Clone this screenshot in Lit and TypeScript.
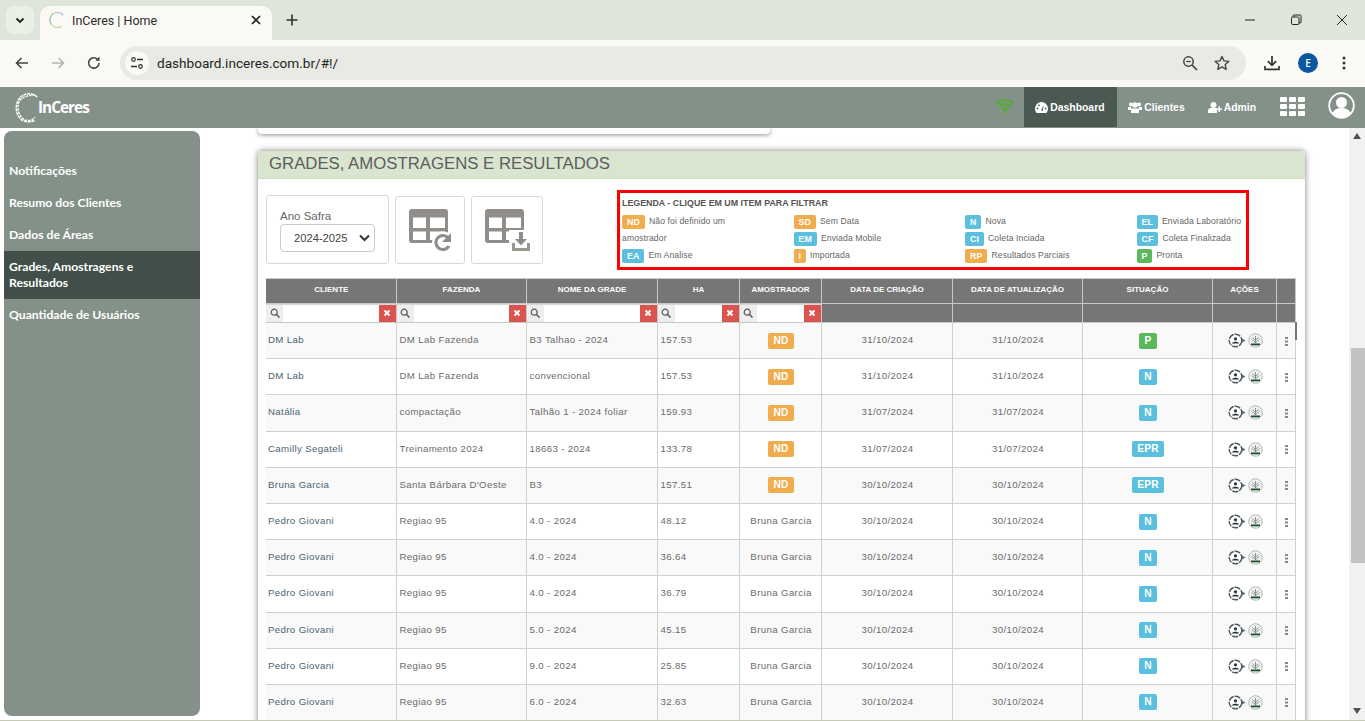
import { LitElement, html, css, svg } from "lit";
import { customElement } from "lit/decorators.js";

const COLS = [
  { t: "CLIENTE", w: 130, f: true },
  { t: "FAZENDA", w: 130, f: true },
  { t: "NOME DA GRADE", w: 131, f: true },
  { t: "HA", w: 82, f: true },
  { t: "AMOSTRADOR", w: 82, f: true },
  { t: "DATA DE CRIAÇÃO", w: 131, f: false },
  { t: "DATA DE ATUALIZAÇÃO", w: 130, f: false },
  { t: "SITUAÇÃO", w: 130, f: false },
  { t: "AÇÕES", w: 64, f: false },
  { t: "", w: 19, f: false },
];

const ROWS: string[][] = [
  ["DM Lab", "DM Lab Fazenda", "B3 Talhao - 2024", "157.53", "ND", "31/10/2024", "31/10/2024", "P"],
  ["DM Lab", "DM Lab Fazenda", "convencional", "157.53", "ND", "31/10/2024", "31/10/2024", "N"],
  ["Natália", "compactação", "Talhão 1 - 2024 foliar", "159.93", "ND", "31/07/2024", "31/07/2024", "N"],
  ["Camilly Segateli", "Treinamento 2024", "18663 - 2024", "133.78", "ND", "31/07/2024", "31/07/2024", "EPR"],
  ["Bruna Garcia", "Santa Bárbara D'Oeste", "B3", "157.51", "ND", "30/10/2024", "30/10/2024", "EPR"],
  ["Pedro Giovani", "Regiao 95", "4.0 - 2024", "48.12", "Bruna Garcia", "30/10/2024", "30/10/2024", "N"],
  ["Pedro Giovani", "Regiao 95", "4.0 - 2024", "36.64", "Bruna Garcia", "30/10/2024", "30/10/2024", "N"],
  ["Pedro Giovani", "Regiao 95", "4.0 - 2024", "36.79", "Bruna Garcia", "30/10/2024", "30/10/2024", "N"],
  ["Pedro Giovani", "Regiao 95", "5.0 - 2024", "45.15", "Bruna Garcia", "30/10/2024", "30/10/2024", "N"],
  ["Pedro Giovani", "Regiao 95", "9.0 - 2024", "25.85", "Bruna Garcia", "30/10/2024", "30/10/2024", "N"],
  ["Pedro Giovani", "Regiao 95", "6.0 - 2024", "32.63", "Bruna Garcia", "30/10/2024", "30/10/2024", "N"],
];

const LEGEND: [string, string][][] = [
  [["ND", "Não foi definido um amostrador"], ["EA", "Em Analise"]],
  [["SD", "Sem Data"], ["EM", "Enviada Mobile"], ["I", "Importada"]],
  [["N", "Nova"], ["CI", "Coleta Inciada"], ["RP", "Resultados Parciais"]],
  [["EL", "Enviada Laboratório"], ["CF", "Coleta Finalizada"], ["P", "Pronta"]],
];

const MENU = ["Notificações", "Resumo dos Clientes", "Dados de Áreas", "Grades, Amostragens e Resultados", "Quantidade de Usuários"];

const tagColor = (t: string) => {
  if (["ND", "SD", "I", "RP"].includes(t)) return "orange";
  if (t === "P") return "green";
  return "blue";
};

const gridIcon = (down: boolean) => html`
  <svg width="48" height="44" viewBox="0 0 48 44">
    <rect width="39" height="34" rx="3" fill="#918d8a"/>
    <path fill="#fff" d="M4 8.500h13v10.500H4zM21 8.500h15v10.500H21zM4 22.500h13v8.500H4zM21 22.500h15v8.500H21z"/>
    ${down
      ? svg`<rect x="24" y="21" width="24" height="23" fill="#fff"/>
            <path fill="#9a9692" d="M27 34h3v5h12v-5h3v8H27z"/>
            <path fill="#918d8a" d="M34 23h4v7h4l-6 6.500-6-6.500h4z"/>`
      : svg`<circle cx="34" cy="33.500" r="11" fill="#fff"/>
            <path fill="none" stroke="#918d8a" stroke-width="3" d="M40.500 31a7 7 0 1 0-.5 6"/>
            <path fill="#918d8a" d="M42 24v9h-9z"/>`}
  </svg>`;

@customElement("app-root")
export class AppRoot extends LitElement {
  static styles = css`
    :host { display: block; width: 1365px; height: 721px; overflow: hidden; background: #fff; font-family: "Liberation Sans", Arial, sans-serif; }
    .page { height: 721px; display: flex; flex-direction: column; overflow: hidden; }

    .tabstrip { height: 40px; flex: none; background: #dfe5da; display: flex; align-items: flex-end; position: relative; }
    .tablist-btn { width: 28px; height: 28px; margin: 0 0 6px 6px; border-radius: 8px; background: #eaf1e4; display: flex; align-items: center; justify-content: center; }
    .tab { width: 232px; height: 34px; margin-left: 6px; background: #faf9f5; border-radius: 10px 10px 0 0; display: flex; align-items: center; padding: 0 10px 6px 8px; box-sizing: border-box; font: 12.5px Roboto, sans-serif; color: #2b2b2b; }
    .tab .title { margin-left: 6px; flex: 1; }
    .plus { margin: 0 0 6px 6px; width: 28px; height: 28px; display: flex; align-items: center; justify-content: center; }
    .win { margin-left: auto; display: flex; align-self: flex-start; height: 40px; }
    .win span { width: 46px; display: flex; align-items: center; justify-content: center; }

    .toolbar { height: 46px; flex: none; background: #faf9f5; display: flex; align-items: center; box-sizing: border-box; padding-left: 4px; }
    .nav-i { width: 36px; height: 36px; display: flex; align-items: center; justify-content: center; }
    .omni { width: 1126px; height: 34px; margin-left: 8px; background: #e9eae3; border-radius: 17px; display: flex; align-items: center; font: 13.6px Roboto, sans-serif; color: #1f1f1f; }
    .omni .tune { width: 24px; height: 24px; border-radius: 12px; margin: 0 8px 0 5px; background: #faf9f5; display: flex; align-items: center; justify-content: center; }
    .omni .url { flex: 1; }
    .omni .i { width: 32px; display: flex; justify-content: center; }
    .omni .i.last { margin-right: 8px; }
    .dl { width: 26px; margin-left: 13px; display: flex; justify-content: center; }
    .acct { width: 20px; height: 20px; margin-left: 13px; border-radius: 50%; background: #0b57a0; color: #fff; font: 600 10px "Open Sans", sans-serif; display: flex; align-items: center; justify-content: center; }
    .dots { margin-left: 24px; display: flex; }

    .appbar { height: 41px; margin-top: 1px; flex: none; background: #849189; display: flex; align-items: stretch; color: #fff; position: relative; z-index: 2; }
    .logo { display: flex; align-items: center; margin-left: 15px; width: 90px; }
    .logo b { font: 700 15.4px "Open Sans", sans-serif; margin-left: -1px; letter-spacing: -1px; }
    .bar-right { margin-left: auto; display: flex; align-items: stretch; }
    .wifi { display: flex; align-items: center; margin-right: 9px; padding-bottom: 4px; }
    .bar-item { display: flex; align-items: center; gap: 2px; font-weight: 700; font-size: 10.4px; padding: 0 12px 0 11px; height: 40px; }
    .bar-item.active { background: #4a5a53; width: 93px; box-sizing: border-box; }
    .apps { display: grid; grid-template-columns: repeat(3, 7px); grid-auto-rows: 5px; gap: 2px; align-content: center; margin-left: 12px; padding-bottom: 2px; }
    .apps i { background: #fff; border-radius: 1px; display: block; }
    .avatar { display: flex; align-items: center; margin: 0 10px 0 23px; padding-bottom: 4px; }

    .body { flex: 1; min-height: 0; display: flex; position: relative; }
    .side { width: 196px; margin: 3px 0 5px 4px; background: #849189; border-radius: 8px; padding-top: 24px; box-sizing: border-box; flex: none; font: 700 12.2px Lato, sans-serif; color: #fff; }
    .side a { display: block; padding: 8px 30px 8px 5px; line-height: 16px; }
    .side a.on { background: #414f48; }
    .main { flex: 1; min-width: 0; padding: 0 44px 0 58px; overflow: hidden; }
    .stub { width: 512px; height: 6px; background: #fff; border-radius: 0 0 4px 4px; box-shadow: 0 1px 4px rgba(0,0,0,.45); }
    .panel { margin-top: 17px; width: 1047px; background: #fff; border-radius: 4px 4px 0 0; box-shadow: 0 0 6px rgba(0,0,0,.5); height: 600px; overflow: hidden; }
    .panel h2 { margin: 0; height: 27px; background: #dae5d0; color: #5d5d5d; font: 400 16.75px/25px "Liberation Sans", sans-serif; padding-left: 11px; border-bottom: 1px solid #cfdcc4; }
    .tools { display: flex; align-items: flex-start; margin: 16px 0 0 8px; height: 83px; }
    .box { border: 1px solid #d8d8d8; border-radius: 3px; box-sizing: border-box; background: #fff; }
    .safra { width: 123px; height: 69px; padding: 14px 13px; font-size: 11.5px; color: #666; }
    .safra .sel { margin-top: 2px; width: 95px; height: 28px; box-sizing: border-box; border: 1px solid #ccc; border-radius: 4px; display: flex; align-items: center; justify-content: space-between; padding: 0 4px 0 13px; color: #444; font-size: 11.2px; }
    .ico { margin-left: 6px; margin-top: 1px; height: 68px; width: 70px; padding: 12px 0 0 13px; box-sizing: border-box; }
    .ico.wide { width: 72px; }
    .legend { margin: -5px 0 0 74px; width: 632px; height: 80px; box-sizing: border-box; border: 3px solid #f00; padding: 3px 2px 0; font-size: 8.65px; color: #666; letter-spacing: .1px; }
    .legend h4 { margin: 1px 0 4px; font-size: 8.85px; font-weight: 700; color: #555; line-height: 12px; letter-spacing: 0; }
    .lg { display: grid; grid-template-columns: repeat(4, 171.5px); }
    .lg div { line-height: 17px; }
    .lg p { margin: 0; max-width: 140px; }
    .tag { display: inline-block; border-radius: 2px; color: #fff; font-weight: 700; text-align: center; }
    .lg .tag { font-size: 8.8px; line-height: 14px; padding: 0 5px; margin-right: 4px; vertical-align: -1px; }
    .orange { background: #f0ad4e; }
    .blue { background: #5bc0de; }
    .green { background: #5cb85c; }

    .tw { margin-left: 8px; position: relative; width: 1032px; }
    table { border-collapse: collapse; table-layout: fixed; width: 1029px; font-size: 9.7px; }
    th { background: #767676; color: #fff; font-size: 8px; font-weight: 700; height: 25px; box-sizing: border-box; padding: 0 0 3px 1px; border: 1px solid #c8c8c8; }
    th:first-child, td:first-child { border-left: none; }
    tr.f th { height: 19px; padding: 0; vertical-align: middle; }
    tr.f th.has { background: #d8d8d8; }
    td { height: 36.2px; box-sizing: border-box; padding: 0 1px 2px 3px; border: 1px solid #d0d0d0; color: #6b6b6b; letter-spacing: .35px; }
    td:first-child { padding-left: 2px; color: #4a6472; }
    tbody tr:nth-child(odd) td { background: #f9f9f9; }
    td.c { text-align: center; }
    td.tg { padding-bottom: 0; }
    td .tag { font-size: 10.2px; line-height: 16px; min-width: 18px; box-sizing: border-box; padding: 0 5.5px; letter-spacing: .2px; }
    .flt { display: flex; height: 17px; align-items: stretch; }
    .flt .s { width: 17px; background: #eee; display: flex; align-items: center; justify-content: center; flex: none; }
    .flt .in { flex: 1; background: #fff; }
    .flt .x { width: 17px; background: #d9534f; display: flex; align-items: center; justify-content: center; flex: none; }
    .act { display: flex; justify-content: center; align-items: center; gap: 1px; }
    .kebab { display: flex; justify-content: center; margin-top: 1px; }
    .thumb { position: absolute; left: 1029px; top: 44px; width: 2px; height: 18px; background: #777; }

    .sb { width: 16px; flex: none; background: #f1f1f1; display: flex; flex-direction: column; padding-bottom: 2px; box-sizing: border-box; }
    .sb .ar { height: 16px; display: flex; align-items: center; justify-content: center; }
    .sb .tr { flex: 1; padding: 204px 0 0 2px; }
    .sb .th { height: 215px; background: #c1c1c1; }
    .line { height: 1px; flex: none; background: #c5c9b4; margin-top: -1px; position: relative; z-index: 3; }
  `;

  render() {
    return html`<div class="page">
      <div class="tabstrip">
        <div class="tablist-btn"><svg width="12" height="12" viewBox="0 0 12 12"><path d="M2.500 4.500 6 8l3.500-3.500" fill="none" stroke="#222" stroke-width="1.800"/></svg></div>
        <div class="tab">
          <svg width="18" height="18" viewBox="0 0 18 18"><path d="M15 4A7.500 7.500 0 0 0 9 1.500" fill="none" stroke="#9bb6d4" stroke-width="1.200"/><path d="M9 1.500A7.500 7.500 0 0 0 2.500 6" fill="none" stroke="#a9c77b" stroke-width="1.200"/><path d="M2.500 6A7.500 7.500 0 0 0 3 13" fill="none" stroke="#8fbcae" stroke-width="1.200"/><path d="M3 13a7.500 7.500 0 0 0 11 2" fill="none" stroke="#c9d49d" stroke-width="1.200"/></svg>
          <span class="title">InCeres | Home</span>
          <svg width="12" height="12" viewBox="0 0 12 12"><path d="M2 2l8 8M10 2l-8 8" stroke="#222" stroke-width="1.700"/></svg>
        </div>
        <div class="plus"><svg width="14" height="14" viewBox="0 0 14 14"><path d="M7 1.500v11M1.500 7h11" stroke="#333" stroke-width="1.600"/></svg></div>
        <div class="win">
          <span><svg width="12" height="12" viewBox="0 0 12 12"><path d="M1 6h10" stroke="#222"/></svg></span>
          <span><svg width="12" height="12" viewBox="0 0 12 12"><path d="M3 3V2a1 1 0 0 1 1-1h6a1 1 0 0 1 1 1v6a1 1 0 0 1-1 1H9" fill="none" stroke="#222"/><rect x="1.500" y="3" width="7.500" height="7.500" rx="1.200" fill="none" stroke="#222"/></svg></span>
          <span><svg width="12" height="12" viewBox="0 0 12 12"><path d="M1 1l10 10M11 1 1 11" stroke="#222"/></svg></span>
        </div>
      </div>
      <div class="toolbar">
        <span class="nav-i"><svg width="16" height="16" viewBox="0 0 16 16"><path d="M14 8H3M7.500 3 2.500 8l5 5" fill="none" stroke="#444" stroke-width="1.600"/></svg></span>
        <span class="nav-i"><svg width="16" height="16" viewBox="0 0 16 16"><path d="M2 8h11M8.500 3l5 5-5 5" fill="none" stroke="#b4b4b0" stroke-width="1.600"/></svg></span>
        <span class="nav-i"><svg width="16" height="16" viewBox="0 0 16 16"><path d="M13 8a5.200 5.200 0 1 1-1.400-3.600" fill="none" stroke="#444" stroke-width="1.600"/><path d="M13.500 1.500v4.200H9.300z" fill="#444"/></svg></span>
        <div class="omni">
          <span class="tune"><svg width="14" height="14" viewBox="0 0 14 14"><circle cx="3.500" cy="3.500" r="1.800" fill="none" stroke="#333" stroke-width="1.200"/><path d="M7 3.500h6M1 10.500h6" stroke="#333" stroke-width="1.400"/><circle cx="10.500" cy="10.500" r="1.800" fill="none" stroke="#333" stroke-width="1.200"/></svg></span>
          <span class="url">dashboard.inceres.com.br/#!/</span>
          <span class="i"><svg width="16" height="16" viewBox="0 0 16 16"><circle cx="6.500" cy="6.500" r="4.700" fill="none" stroke="#444" stroke-width="1.500"/><path d="M4.300 6.500h4.400" stroke="#444" stroke-width="1.300"/><path d="M10 10l5 5" stroke="#444" stroke-width="1.700"/></svg></span>
          <span class="i last"><svg width="16" height="16" viewBox="0 0 16 16"><path d="M8 1.500l2 4.400 4.800.5-3.600 3.200 1 4.700L8 11.900l-4.200 2.400 1-4.700L1.200 6.400 6 5.900z" fill="none" stroke="#444" stroke-width="1.400" stroke-linejoin="round"/></svg></span>
        </div>
        <span class="dl"><svg width="16" height="16" viewBox="0 0 16 16"><path d="M8 1v9M3.800 6.200 8 10.400l4.200-4.200M1 11v3.300h14V11" fill="none" stroke="#333" stroke-width="1.700"/></svg></span>
        <span class="acct">E</span>
        <span class="dots"><svg width="4" height="14" viewBox="0 0 4 14"><circle cx="2" cy="2" r="1.500" fill="#333"/><circle cx="2" cy="7" r="1.500" fill="#333"/><circle cx="2" cy="12" r="1.500" fill="#333"/></svg></span>
      </div>
      <div class="appbar">
        <div class="logo">
          <svg width="24" height="32" viewBox="0 0 24 32"><path d="M22 5C17 0 8 1 4 7-1 14 1 26 9 29c4 1.500 8 1 11-1" fill="none" stroke="#fff" stroke-width="1.500" stroke-dasharray="3 .8"/><path d="M20 3C14 3 6 5 4 10 1 17 5 26 10 28c3 1 7 1 10-3" fill="none" stroke="#fff" stroke-width="1.400" stroke-dasharray="2.500 1"/></svg>
          <b>InCeres</b>
        </div>
        <div class="bar-right">
          <span class="wifi"><svg width="20" height="16" viewBox="0 0 20 16"><path d="M1 5.500C6 1 14 1 19 5.500M4 8.500c3.500-3 8.500-3 12 0M7 11.500c2-1.500 4-1.500 6 0" fill="none" stroke="#4fae2c" stroke-width="2"/><circle cx="10" cy="14" r="1.500" fill="#4fae2c"/></svg></span>
          <span class="bar-item active"><svg width="13" height="11" viewBox="0 0 13 11"><path fill="#fff" d="M6.500 0A6.500 6.500 0 0 0 0 6.500c0 1.700.6 3.200 1.600 4.500h9.800A6.700 6.700 0 0 0 13 6.500 6.500 6.500 0 0 0 6.500 0z"/><path d="M6 8.500 8.800 3 7.600 9z" fill="#4a5a53"/><circle cx="2.500" cy="6.500" r=".9" fill="#4a5a53"/><circle cx="4" cy="3.300" r=".9" fill="#4a5a53"/><circle cx="10.500" cy="6.500" r=".9" fill="#4a5a53"/></svg>Dashboard</span>
          <span class="bar-item"><svg width="14" height="11" viewBox="0 0 14 11"><circle cx="3" cy="2.500" r="2" fill="#fff"/><circle cx="11" cy="2.500" r="2" fill="#fff"/><circle cx="7" cy="3" r="2.700" fill="#fff"/><path fill="#fff" d="M0 5h3v3H0zM11 5h3v3h-3zM3 6.500h8V11H3z"/></svg>Clientes</span>
          <span class="bar-item"><svg width="14" height="11" viewBox="0 0 14 11"><circle cx="5.500" cy="3" r="3" fill="#fff"/><path fill="#fff" d="M0 11V8.500C0 7 1.500 6 3 6h5c.7 0 1 .3 1 1v4zM10.500 4.500h1.500v2h2V8h-2v2h-1.500V8h-2V6.500h2z"/></svg>Admin</span>
          <span class="apps">${Array.from({ length: 9 }, () => html`<i></i>`)}</span>
          <span class="avatar"><svg width="27" height="27" viewBox="0 0 27 27"><circle cx="13.500" cy="13.500" r="12.300" fill="none" stroke="#fff" stroke-width="1.800"/><circle cx="13.500" cy="10.500" r="5.500" fill="#fff"/><path fill="#fff" d="M4.500 21.500c1-4 5-5.500 9-5.500s8 1.500 9 5.500a12 12 0 0 1-18 0z"/></svg></span>
        </div>
      </div>
      <div class="body">
        <nav class="side">${MENU.map((m) => html`<a class=${m.startsWith("Grades") ? "on" : ""}>${m}</a>`)}</nav>
        <div class="main">
          <div class="stub"></div>
          <section class="panel">
            <h2>GRADES, AMOSTRAGENS E RESULTADOS</h2>
            <div class="tools">
              <div class="box safra">Ano Safra
                <div class="sel">2024-2025<svg width="11" height="8" viewBox="0 0 11 8"><path d="M1 1.500 5.500 6 10 1.500" fill="none" stroke="#333" stroke-width="2"/></svg></div>
              </div>
              <div class="box ico">${gridIcon(false)}</div>
              <div class="box ico wide">${gridIcon(true)}</div>
              <div class="legend">
                <h4>LEGENDA - CLIQUE EM UM ITEM PARA FILTRAR</h4>
                <div class="lg">
                  ${LEGEND.map((col) => html`<div>${col.map(([t, l]) => html`<p><span class="tag ${tagColor(t)}">${t}</span>${l}</p>`)}</div>`)}
                </div>
              </div>
            </div>
            <div class="tw">
              <table>
                <colgroup>${COLS.map((c) => html`<col style="width:${c.w}px" />`)}</colgroup>
                <thead>
                  <tr>${COLS.map((c) => html`<th>${c.t}</th>`)}</tr>
                  <tr class="f">${COLS.map((c) => html`<th class=${c.f ? "has" : ""}>${c.f ? html`<div class="flt"><span class="s"><svg width="10" height="10" viewBox="0 0 10 10"><circle cx="4.200" cy="4.200" r="3" fill="none" stroke="#555" stroke-width="1.200"/><path d="M6.500 6.500 9.500 9.500" stroke="#555" stroke-width="1.500"/></svg></span><span class="in"></span><span class="x"><svg width="8" height="8" viewBox="0 0 8 8"><path d="M1.500 1.500l5 5M6.500 1.500l-5 5" stroke="#fff" stroke-width="2"/></svg></span></div>` : ""}</th>`)}</tr>
                </thead>
                <tbody>
                  ${ROWS.map((r) => html`<tr>
                    ${r.map((v, i) => {
                      if (i === 7 || (i === 4 && v === "ND")) return html`<td class="c tg"><span class="tag ${tagColor(v)}">${v}</span></td>`;
                      return html`<td class=${i >= 4 ? "c" : ""}>${v}</td>`;
                    })}
                    <td class="tg"><div class="act">
                      <svg width="19" height="15" viewBox="0 0 19 15"><circle cx="7.500" cy="7.500" r="6.300" fill="#fff" stroke="#4d5c5a" stroke-width="1.400" stroke-dasharray="6 1"/><circle cx="7.500" cy="5.800" r="1.600" fill="#234"/><path d="M4 10.500c0-2.500 7-2.500 7 0z" fill="#234"/><path d="M14 5.500l3.500 2-3.500 2z" fill="#567"/></svg>
                      <svg width="15" height="15" viewBox="0 0 15 15"><circle cx="7.500" cy="7.500" r="6.800" fill="#eef1ec" stroke="#a9b5ae" stroke-width=".9"/><path d="M7.500 3v7M4.500 4.500l3 3 3-3M3.500 6.500l4 3 4-3" stroke="#778" fill="none" stroke-width=".8"/><path d="M3 10.500h9v1.800H3z" fill="#1f4a30"/></svg>
                    </div></td>
                    <td class="tg"><div class="kebab"><svg width="3" height="9" viewBox="0 0 3 9"><path fill="#888" d="M0 0h3v2H0zM0 3.500h3v2H0zM0 7h3v2H0z"/></svg></div></td>
                  </tr>`)}
                </tbody>
              </table>
              <div class="thumb"></div>
            </div>
          </section>
        </div>
        <div class="sb">
          <span class="ar"><svg width="8" height="6" viewBox="0 0 8 6"><path d="M4 0l4 6H0z" fill="#505050"/></svg></span>
          <div class="tr"><div class="th"></div></div>
          <span class="ar"><svg width="8" height="6" viewBox="0 0 8 6"><path d="M4 6l4-6H0z" fill="#505050"/></svg></span>
        </div>
      </div>
      <div class="line"></div>
    </div>`;
  }
}
